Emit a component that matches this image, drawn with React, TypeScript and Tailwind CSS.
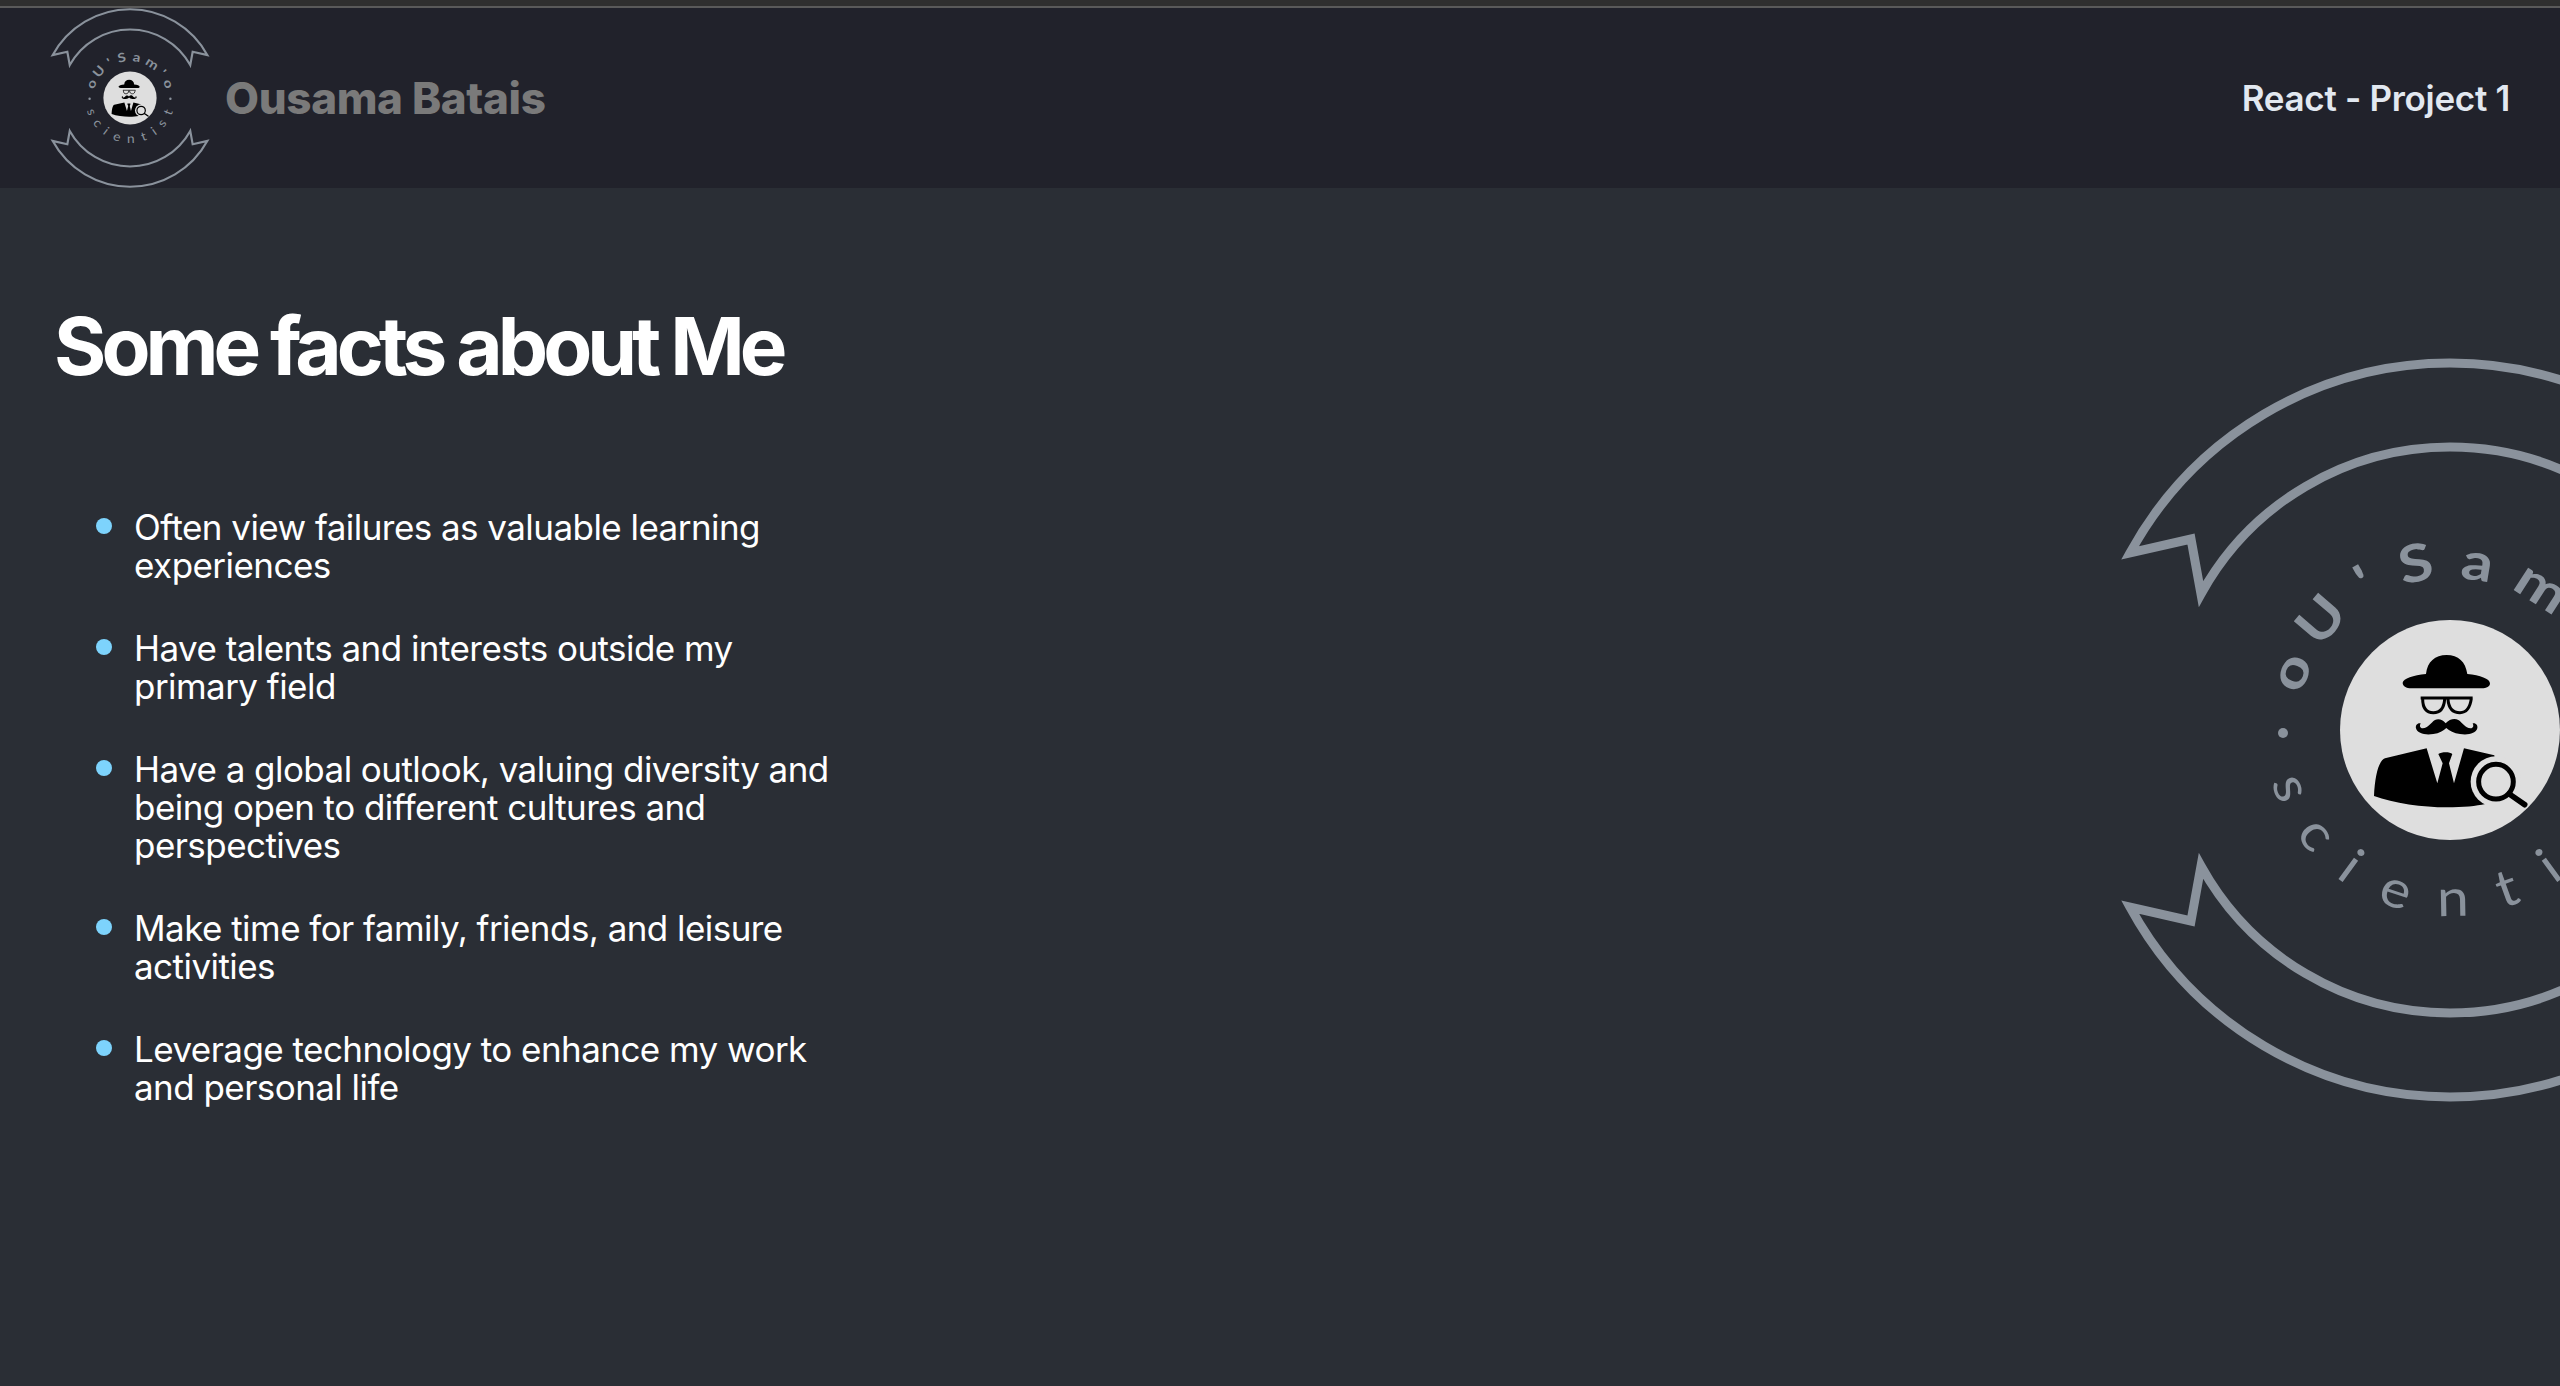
const topLetters = [
  { c: "o", a: -70 },
  { c: "U", a: -49.5 },
  { c: "'", a: -30 },
  { c: "S", a: -11.7 },
  { c: "a", a: 9.4 },
  { c: "m", a: 32.8 },
  { c: "'", a: 52 },
  { c: "o", a: 70 },
]

const bottomLetters = [
  { c: "s", a: -70 },
  { c: "c", a: -52 },
  { c: "i", a: -36 },
  { c: "e", a: -18.6 },
  { c: "n", a: 1 },
  { c: "t", a: 19.7 },
  { c: "i", a: 36 },
  { c: "s", a: 52 },
  { c: "t", a: 69.5 },
]

const facts = [
  "Often view failures as valuable learning experiences",
  "Have talents and interests outside my primary field",
  "Have a global outlook, valuing diversity and being open to different cultures and perspectives",
  "Make time for family, friends, and leisure activities",
  "Leverage technology to enhance my work and personal life",
]

const ribbon = "M-320 -177 A364.5 364.5 0 0 1 320 -177 L259 -191 L249 -136 A284.4 284.4 0 0 0 -249 -136 L-259 -191 Z"

function Logo({ className }: { className: string }) {
  return (
    <svg viewBox="-372 -372 744 744" className={className}>
      <g fill="none" stroke="#8a929c" strokeWidth="9" strokeLinejoin="miter" strokeMiterlimit="8">
        <path d={ribbon} />
        <path d={ribbon} transform="scale(1 -1)" />
      </g>
      <g fill="#8a929c" fontFamily="Lato, sans-serif" fontSize="52" textAnchor="middle">
        {topLetters.map((l, i) => (
          <text key={i} transform={`rotate(${l.a}) translate(0 -152) scale(1.2 1)`} fontWeight="700">{l.c}</text>
        ))}
        {bottomLetters.map((l, i) => (
          <text key={i} transform={`rotate(${-l.a}) translate(0 186) scale(1.1 1)`}>{l.c}</text>
        ))}
        <circle cx="-167" cy="3" r="5" />
        <circle cx="167" cy="3" r="5" />
      </g>
      <circle cx="0" cy="0" r="110" fill="#dedede" />
      <g transform="translate(-150 -130) scale(0.3333)">
        <path d="M378 222 C382 185 405 165 440 165 C475 165 497 185 502 222 C540 226 570 236 570 250 C570 260 560 265 545 265 L335 265 C318 265 308 258 308 248 C310 236 340 226 378 222 Z" />
        <path d="M362 294 H518 M368 296 C368 325 378 338 400 338 C422 338 432 325 434 298 M444 298 C446 325 458 338 480 338 C500 338 510 325 514 296" fill="none" stroke="#000" strokeWidth="9" />
        <path d="M437 370 C428 358 415 355 405 360 C392 368 385 384 368 385 C360 385 358 378 362 370 C352 368 346 376 348 385 C352 400 375 406 400 402 C418 400 430 392 439 384 C448 392 462 400 480 402 C505 406 528 400 532 385 C534 376 528 368 518 370 C522 378 520 385 512 385 C495 384 488 368 475 360 C463 354 448 358 437 370 Z" />
        <path d="M380 445 L255 475 C235 482 225 530 222 588 C280 610 370 622 440 622 C490 622 530 618 556 612 L600 560 L583 466 L492 445 L462 550 L447 490 L457 462 C450 455 425 455 415 462 L428 490 L412 550 Z" />
        <circle cx="588" cy="545" r="76" fill="#dedede" />
        <circle cx="588" cy="545" r="52" fill="#dedede" stroke="#000" strokeWidth="15" />
        <path d="M628 582 L674 614" stroke="#000" strokeWidth="17" strokeLinecap="round" />
      </g>
    </svg>
  )
}

export default function App() {
  return (
    <div className="h-screen overflow-hidden bg-[#2a2e35] font-['Inter',sans-serif] text-white">
      <div className="h-[8px] border-b-2 border-[#5a5a5a] bg-[#2f2f2f]" />
      <header className="flex h-[180px] items-center justify-between bg-[#21222b] pl-[40px] pr-[50px]">
        <div className="flex items-center gap-[5px]">
          <Logo className="h-[180px] w-[180px]" />
          <h2 className="text-[44px] font-extrabold tracking-[-0.35px] text-[#7a7a7a]">Ousama Batais</h2>
        </div>
        <span className="text-[35px] font-semibold tracking-[-0.3px] text-[#e2e8f0]">React - Project 1</span>
      </header>
      <main className="flex items-start">
        <div className="w-[845px] shrink-0 pl-[54px] pt-[110px]">
          <h1 className="text-[80px] leading-[1.2] font-bold tracking-[-5px]">Some facts about Me</h1>
          <ul className="mt-[114px] flex flex-col gap-[45px] pl-[42px]">
            {facts.map(f => (
              <li key={f} className="relative pl-[38px] text-[35px] leading-[38px] tracking-[-0.55px]">
                <span className="absolute left-0 top-[10px] h-[16px] w-[16px] rounded-full bg-[#7dd3fc]" />
                {f}
              </li>
            ))}
          </ul>
        </div>
        <Logo className="ml-auto mr-[-262px] mt-[170px] h-[744px] w-[744px] shrink-0" />
      </main>
    </div>
  )
}
